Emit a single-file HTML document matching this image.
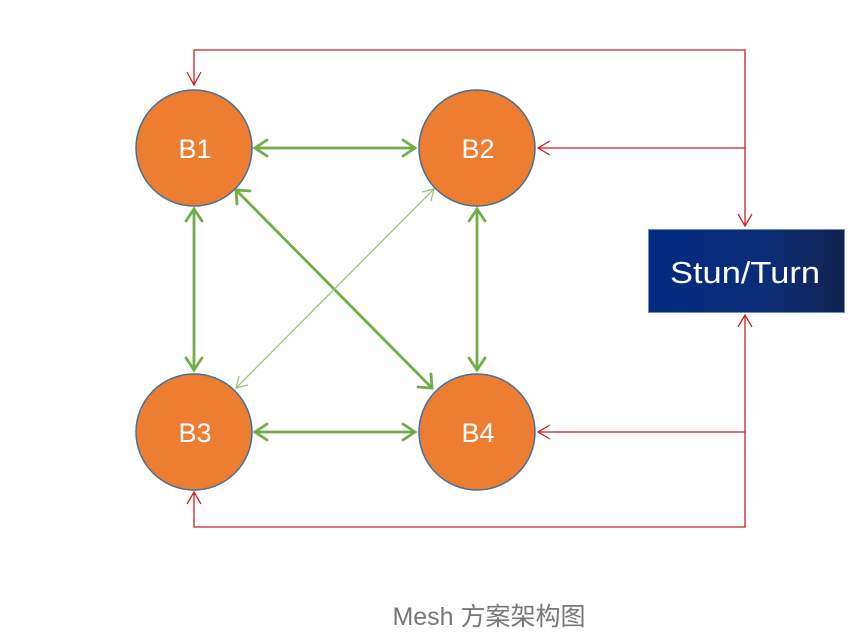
<!DOCTYPE html>
<html><head><meta charset="utf-8"><style>
html,body{margin:0;padding:0;background:#fff;width:859px;height:635px;overflow:hidden}
</style></head><body>
<svg width="859" height="635" xmlns="http://www.w3.org/2000/svg">
<defs>
<linearGradient id="g" x1="0" x2="1" y1="0" y2="0">
<stop offset="0" stop-color="#022a80"/><stop offset="0.6" stop-color="#0c2d78"/><stop offset="1" stop-color="#11224f"/>
</linearGradient>
</defs>
<g fill="none" stroke="#cc1f27" stroke-width="1.3">
<polyline points="194,85 194,50 745,50 745,226"/>
<polyline points="187,72 194,85 201,72"/>
<polyline points="738,214 745,226 752,214"/>
<line x1="745" y1="148" x2="538" y2="148"/>
<polyline points="550,141 538,148 550,155"/>
<polyline points="194,492 194,527 745,527 745,315"/>
<polyline points="738,327 745,315 752,327"/>
<polyline points="187,504 194,492 201,504"/>
<line x1="745" y1="432" x2="538" y2="432"/>
<polyline points="550,425 538,432 550,439"/>
</g>
<g fill="none" stroke="#70ad47" stroke-width="2.8" stroke-linecap="round">
<line x1="255" y1="148" x2="415" y2="148"/>
<polyline points="267,140 255,148 267,156"/><polyline points="403,140 415,148 403,156"/>
<line x1="255" y1="432" x2="415" y2="432"/>
<polyline points="267,424 255,432 267,440"/><polyline points="403,424 415,432 403,440"/>
<line x1="194" y1="209" x2="194" y2="370"/>
<polyline points="186,221 194,209 202,221"/><polyline points="186,358 194,370 202,358"/>
<line x1="477" y1="209" x2="477" y2="370"/>
<polyline points="469,221 477,209 485,221"/><polyline points="469,358 477,370 485,358"/>
<line x1="236" y1="190" x2="432" y2="388"/>
<polyline points="237,204 236,190 250,191"/><polyline points="418,387 432,388 431,374"/>
</g>
<g fill="none" stroke="#8fc46e" stroke-width="1.2">
<line x1="434" y1="189" x2="236" y2="388"/>
<polyline points="422,192 434,189 431,201"/><polyline points="239,376 236,388 248,385"/>
</g>
<g fill="#ed7d31" stroke="#41719c" stroke-width="1.5">
<circle cx="194" cy="148" r="58"/><circle cx="477" cy="148" r="58"/>
<circle cx="194" cy="432" r="58"/><circle cx="477" cy="432" r="58"/>
</g>
<g fill="#fff" font-family="Liberation Sans, sans-serif" font-size="27" text-anchor="middle">
<text x="195" y="158">B1</text><text x="478" y="158">B2</text>
<text x="195" y="442">B3</text><text x="478" y="442">B4</text>
</g>
<rect x="648.5" y="229.5" width="196" height="83" fill="url(#g)" stroke="#6d8fbf"/>
<text x="745" y="283" fill="#fff" font-family="Liberation Sans, sans-serif" font-size="31" text-anchor="middle" textLength="150" lengthAdjust="spacingAndGlyphs">Stun/Turn</text>
<text x="489" y="625" fill="#777" font-family="Liberation Sans, 'Noto Sans CJK SC', sans-serif" font-size="25" text-anchor="middle">Mesh 方案架构图</text>
</svg>
</body></html>
